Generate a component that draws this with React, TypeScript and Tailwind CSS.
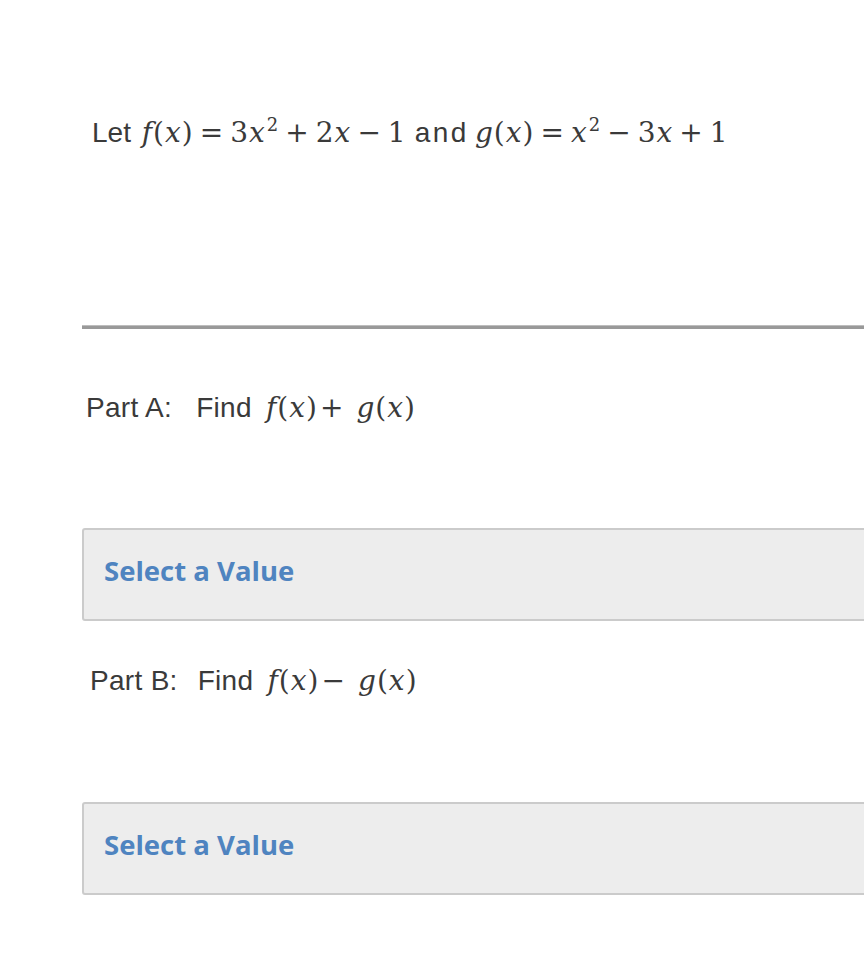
import React from 'react';

const sans = "font-['Liberation_Sans',Arial,sans-serif]";
const serif = "font-['DejaVu_Serif','Liberation_Serif',serif] text-[28px] tracking-[1px]";

// Small helpers for inline math pieces
const V = ({ children, cls = '' }: { children: React.ReactNode; cls?: string }) => (
  <span className={`${serif} italic ${cls}`}>{children}</span>
);
const N = ({ children }: { children: React.ReactNode }) => (
  <span className={serif}>{children}</span>
);
const Op = ({ children, cls = 'mx-[6px]' }: { children: React.ReactNode; cls?: string }) => (
  <span className={`${serif} ${cls}`}>{children}</span>
);
const Sq = () => (
  <sup className="font-['DejaVu_Serif',serif] text-[18px] relative -top-[0.6em] ml-[1px] mr-[1px]">2</sup>
);

const SelectBox = () => (
  <div className="w-[820px] h-[93px] border-2 border-[#cbcbcb] rounded-[3px] bg-[#ededed] flex items-center pl-[20px] pb-[7px]">
    <span className="font-['Open_Sans',sans-serif] font-bold text-[27.5px] text-[#4f84c0]">Select a Value</span>
  </div>
);

export default function App() {
  return (
    <div className="w-[864px] h-[964px] overflow-hidden bg-white text-[#3a3a3a]">
      <div className="pl-[82px]">
        <p className={`${sans} text-[28px] leading-[40px] pt-[113px] pl-[10px] whitespace-nowrap`}>
          Let <V cls="ml-[3px]">f</V><N>(</N><V>x</V><N>)</N><Op>=</Op><N>3</N><V>x</V><Sq /><Op>+</Op><N>2</N><V>x</V><Op>−</Op><N>1</N>
          <span className="tracking-[2.5px] ml-[8px] mr-[6px]">and</span>
          <V>g</V><N>(</N><V>x</V><N>)</N><Op>=</Op><V>x</V><Sq /><Op>−</Op><N>3</N><V>x</V><Op>+</Op><N>1</N>
        </p>

        <div className="mt-[172px] h-[4px] w-[800px] bg-[#999999] border-t border-[#bdbdbd]" />

        <p className={`${sans} text-[28px] leading-[40px] mt-[59px] pl-[4px] whitespace-nowrap tracking-[0.3px]`}>
          <span className="mr-[24px]">Part A:</span>Find <V cls="ml-[6px]">f</V><N>(</N><V>x</V><N>)</N><Op cls="ml-[2px] mr-[12px]">+</Op><V>g</V><N>(</N><V>x</V><N>)</N>
        </p>

        <div className="mt-[100px]">
          <SelectBox />
        </div>

        <p className={`${sans} text-[28px] leading-[40px] mt-[40px] pl-[8px] whitespace-nowrap tracking-[0.3px]`}>
          <span className="mr-[20px]">Part B:</span>Find <V cls="ml-[6px]">f</V><N>(</N><V>x</V><N>)</N><Op cls="ml-[2px] mr-[12px]">−</Op><V>g</V><N>(</N><V>x</V><N>)</N>
        </p>

        <div className="mt-[101px]">
          <SelectBox />
        </div>
      </div>
    </div>
  );
}
